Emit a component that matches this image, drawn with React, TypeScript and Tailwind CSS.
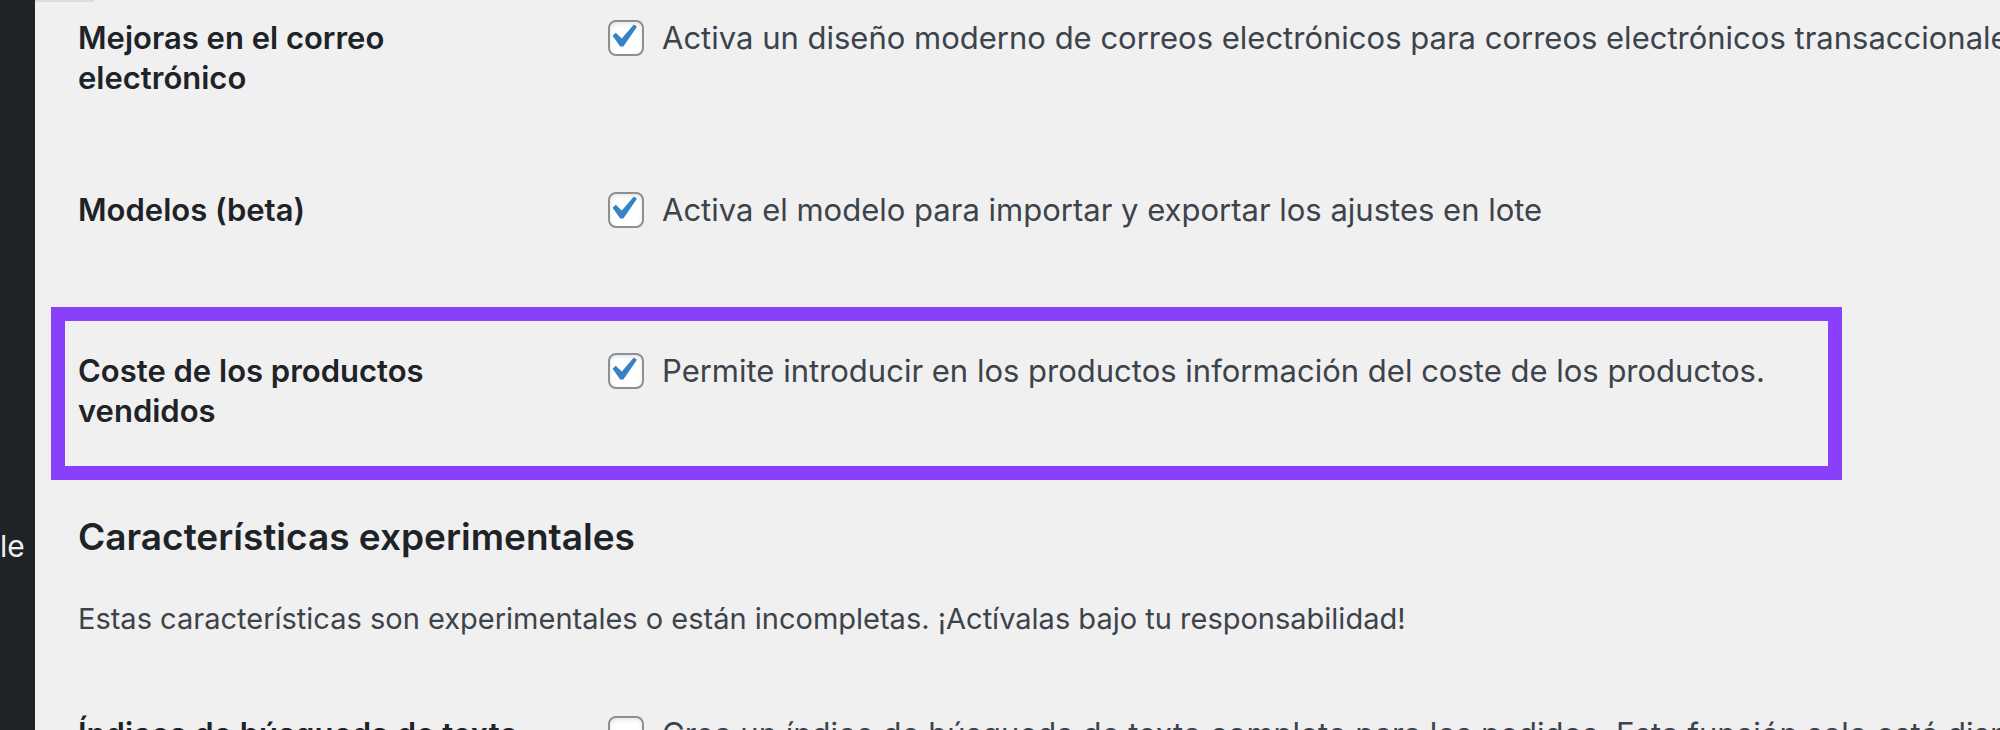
import React from "react";

function Checkbox({ checked }: { checked: boolean }) {
  return (
    <span className="relative mt-[2px] block h-[36px] w-[36px] shrink-0 rounded-[8px] border-2 border-[#8c8f94] bg-white shadow-[inset_0_2px_4px_rgba(0,0,0,0.1)]">
      {checked && (
        <svg className="absolute left-[-11px] top-[-9px] h-[47px] w-[47px]" viewBox="0 0 20 20">
          <path d="M14.83 4.89l1.34.94-5.81 8.38H9.02L5.78 9.67l1.34-1.25 2.57 2.4z" fill="#3582c4" />
        </svg>
      )}
    </span>
  );
}

function SettingRow({ label, text, checked }: { label: string; text: string; checked: boolean }) {
  return (
    <div className="flex items-start">
      <div className="w-[530px] shrink-0 pr-[66px] text-[31px] font-semibold leading-[40px] text-[#1d2327]">{label}</div>
      <label className="flex items-start gap-[18px]">
        <Checkbox checked={checked} />
        <span className="whitespace-nowrap text-[31px] leading-[40px] text-[#3c434a]">{text}</span>
      </label>
    </div>
  );
}

export default function App() {
  return (
    <div className="flex h-[730px] w-[2000px] overflow-hidden bg-[#f0f0f1] font-[Inter,sans-serif]">
      <aside className="w-[35px] shrink-0 overflow-hidden bg-[#1d2327] pt-[526px]">
        <span className="block text-[30px] leading-[40px] text-[#f0f0f1]">le</span>
      </aside>

      <main className="min-w-0 flex-1">
        <div className="h-[2px] w-[59px] bg-[#dcdcde]" />
        <div className="pl-[43px] pt-[16px]">
          <SettingRow
            label="Mejoras en el correo electrónico"
            text="Activa un diseño moderno de correos electrónicos para correos electrónicos transaccionales"
            checked
          />
          <div className="mt-[92px]">
            <SettingRow
              label="Modelos (beta)"
              text="Activa el modelo para importar y exportar los ajustes en lote"
              checked
            />
          </div>

          <div className="ml-[-27px] mt-[77px] w-[1791px] border-[14px] border-[#8a3ffc] pb-[35px] pl-[13px] pt-[30px]">
            <SettingRow
              label="Coste de los productos vendidos"
              text="Permite introducir en los productos información del coste de los productos."
              checked
            />
          </div>

          <h2 className="mt-[33px] text-[37px] font-semibold leading-[48px] text-[#1d2327]">
            Características experimentales
          </h2>
          <p className="mt-[38px] text-[29px] leading-[40px] text-[#3c434a]">
            Estas características son experimentales o están incompletas. ¡Actívalas bajo tu responsabilidad!
          </p>

          <div className="mt-[75px]">
            <SettingRow
              label="Índices de búsqueda de texto completo"
              text="Crea un índice de búsqueda de texto completo para los pedidos. Esta función solo está disponible con el almacenamiento de pedidos de alto rendimiento."
              checked={false}
            />
          </div>
        </div>
      </main>
    </div>
  );
}
